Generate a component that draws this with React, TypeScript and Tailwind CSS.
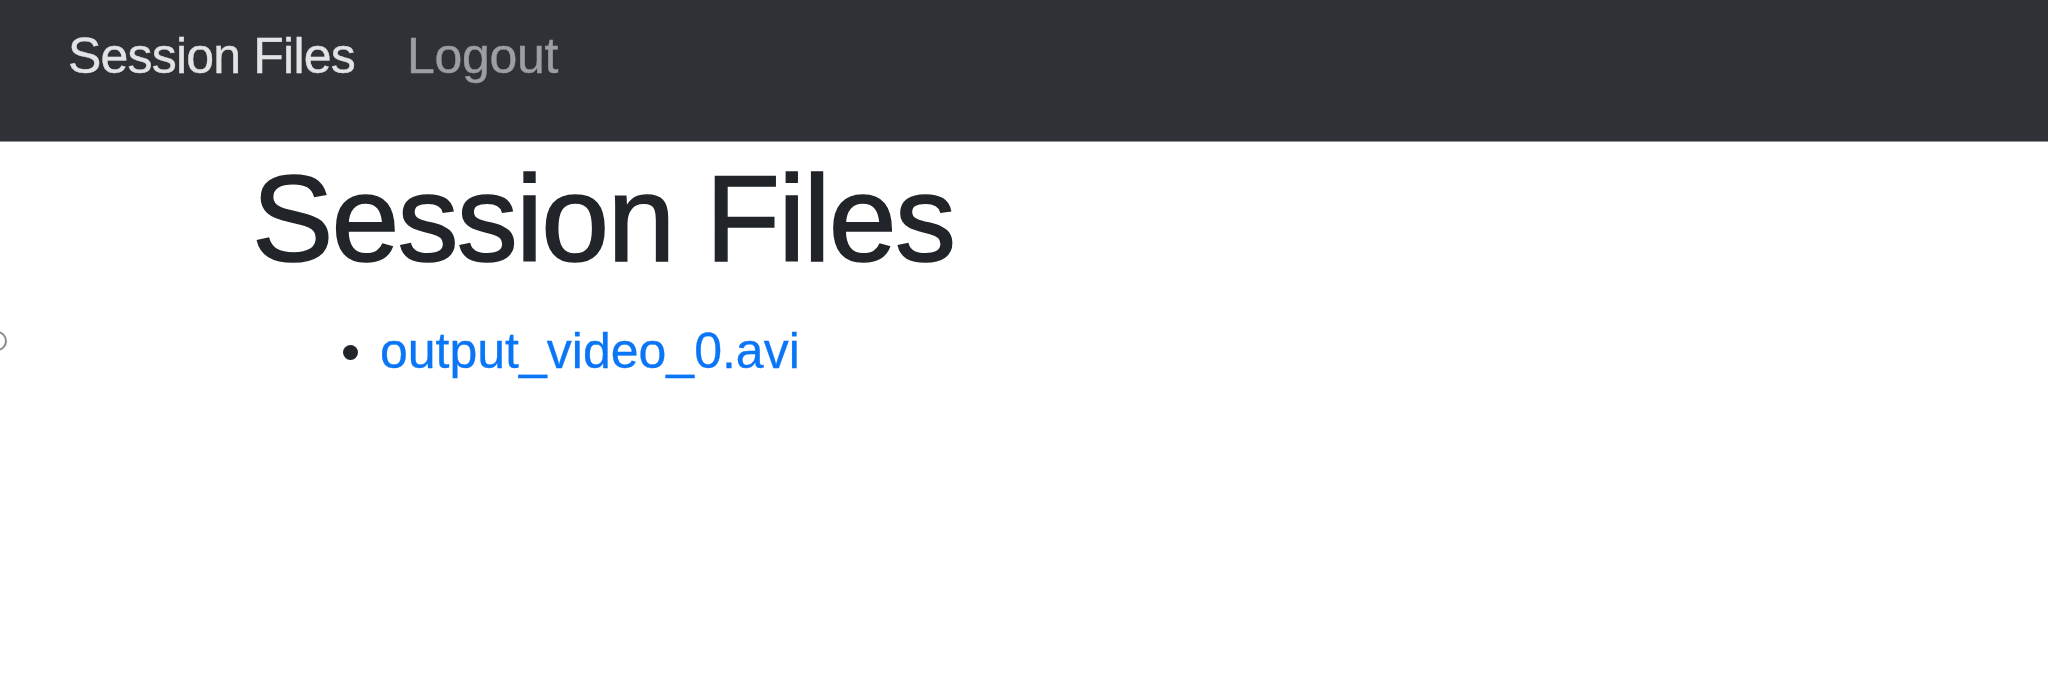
import React from "react";

export default function App() {
  return (
    <div className="relative min-h-[696px] w-full bg-white" style={{ fontFamily: '"Liberation Sans", Arial, sans-serif' }}>
      <nav className="flex h-[142px] items-start border-b border-[#8e9297] bg-[#2e3237] pl-[68px] pt-[31px]">
        <a className="text-[50px] leading-none tracking-[-0.8px] text-[#e2e3e4] [-webkit-text-stroke:0.4px_#e2e3e4]">Session Files</a>
        <a className="ml-[52px] text-[50px] leading-none tracking-[-0.3px] text-[#9c9ea1] [-webkit-text-stroke:0.4px_#9c9ea1]">Logout</a>
      </nav>
      <div className="pl-[252px]">
        <h1 className="mt-[16px] text-[122px] leading-none tracking-[-1.8px] text-[#212529] [-webkit-text-stroke:1.6px_#212529]">Session Files</h1>
        <ul className="mt-[46px] list-disc pl-[128px] text-[50px] leading-none text-[#212529]">
          <li>
            <a className="text-[#0a76f6] [-webkit-text-stroke:0.3px_#0a76f6]">output_video_0.avi</a>
          </li>
        </ul>
      </div>
      <div className="absolute left-[-13px] top-[331px] h-[20px] w-[20px] rounded-full border-2 border-[#8a8a8a]" />
    </div>
  );
}
